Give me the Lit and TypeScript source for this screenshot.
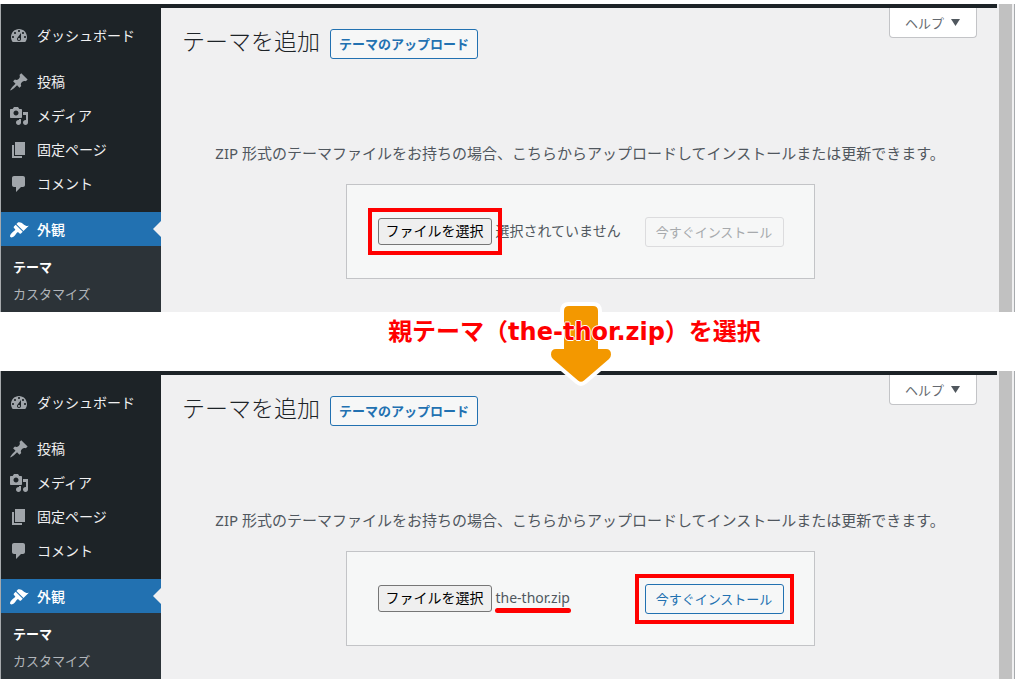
import { LitElement, html, css, svg } from "lit";
import { customElement, property } from "lit/decorators.js";
import { classMap } from "lit/directives/class-map.js";

const ICONS: Record<string, string> = {
  dashboard:
    "M3.76 16h12.48c1.1-1.37 1.76-3.11 1.76-5 0-4.42-3.58-8-8-8s-8 3.58-8 8c0 1.89.66 3.63 1.76 5zM10 4c.55 0 1 .45 1 1s-.45 1-1 1-1-.45-1-1 .45-1 1-1zM6 6c.55 0 1 .45 1 1s-.45 1-1 1-1-.45-1-1 .45-1 1-1zm8 0c.55 0 1 .45 1 1s-.45 1-1 1-1-.45-1-1 .45-1 1-1zm-5.37 5.55L12 7v6c0 1.1-.9 2-2 2s-2-.9-2-2c0-.57.24-1.08.63-1.45zM4 10c.55 0 1 .45 1 1s-.45 1-1 1-1-.45-1-1 .45-1 1-1zm12 0c.55 0 1 .45 1 1s-.45 1-1 1-1-.45-1-1 .45-1 1-1zm-5 3c0-.55-.45-1-1-1s-1 .45-1 1 .45 1 1 1 1-.45 1-1z",
  post: "M10.44 3.02l1.82-1.82 6.36 6.35-1.83 1.82c-1.05-.68-2.48-.57-3.41.36l-.75.75c-.92.93-1.04 2.35-.35 3.41l-1.83 1.82-2.41-2.41-2.8 2.79c-.42.42-3.38 2.71-3.8 2.29s1.86-3.39 2.28-3.81l2.79-2.79L4.1 9.36l1.83-1.82c1.05.69 2.48.57 3.4-.36l.75-.75c.93-.92 1.05-2.35.36-3.41z",
  media:
    "M13 11V4c0-.55-.45-1-1-1h-1.67L9 1H5L3.67 3H2c-.55 0-1 .45-1 1v7c0 .55.45 1 1 1h10c.55 0 1-.45 1-1zM7 4.5c1.38 0 2.5 1.12 2.5 2.5S8.38 9.5 7 9.5 4.5 8.38 4.5 7 5.62 4.5 7 4.5zM14 6h5v10.5c0 1.38-1.12 2.5-2.5 2.5S14 17.88 14 16.5s1.12-2.5 2.5-2.5c.17 0 .34.02.5.05V9h-3V6zm-4 8.05V13h2v3.5c0 1.38-1.12 2.5-2.5 2.5S7 17.88 7 16.5 8.12 14 9.5 14c.17 0 .34.02.5.05z",
  page: "M6 15V2h10v13H6zm-1 1h8v2H3V5h2v11z",
  comment:
    "M5 2h9c1.1 0 2 .9 2 2v7c0 1.1-.9 2-2 2h-2l-5 5v-5H5c-1.1 0-2-.9-2-2V4c0-1.1.9-2 2-2z",
  appearance:
    "M14.48 11.06L7.41 3.99l1.5-1.5c.5-.56 2.3-.47 3.51.32 1.21.8 1.43 1.28 2.91 2.1 1.18.64 2.45 1.26 4.45.85zm-.71.71L6.7 4.7 4.93 6.47c-.39.39-.39 1.02 0 1.41l1.06 1.06c.39.39.39 1.03 0 1.42-.6.6-1.43 1.11-2.21 1.69-.35.26-.7.53-1.01.84C1.43 14.23.4 16.08 1.4 17.07c.99 1 2.84-.03 4.18-1.36.31-.31.58-.66.85-1.02.57-.78 1.08-1.61 1.69-2.21.39-.39 1.02-.39 1.41 0l1.06 1.06c.39.39 1.02.39 1.41 0z",
};

interface MenuItem {
  icon: string;
  label: string;
  separated?: boolean;
  current?: boolean;
}

const MENU: MenuItem[] = [
  { icon: "dashboard", label: "ダッシュボード" },
  { icon: "post", label: "投稿", separated: true },
  { icon: "media", label: "メディア" },
  { icon: "page", label: "固定ページ" },
  { icon: "comment", label: "コメント" },
  { icon: "appearance", label: "外観", separated: true, current: true },
];

@customElement("admin-menu")
class AdminMenu extends LitElement {
  static styles = css`
    :host {
      display: block;
      background: #1d2327;
      font-size: 14px;
    }
    ul {
      list-style: none;
      margin: 0;
      padding: 0;
    }
    .menu {
      padding-top: 10px;
    }
    .separated {
      margin-top: 12px;
    }
    .item {
      display: flex;
      align-items: center;
      gap: 8px;
      height: 34px;
      padding-left: 8px;
      color: #f0f0f1;
      text-decoration: none;
      position: relative;
    }
    .item svg {
      width: 20px;
      height: 20px;
      margin-top: 2px;
      fill: #a0a5aa;
    }
    .current {
      background: #2271b1;
      color: #fff;
      font-weight: 500;
    }
    .current svg {
      fill: #fff;
    }
    .current::after {
      content: "";
      position: absolute;
      right: 0;
      top: 9px;
      border: 8px solid transparent;
      border-left-width: 0;
      border-right-color: #f0f0f1;
    }
    .submenu {
      background: #2c3338;
      padding: 8px 0 4px;
      font-size: 13px;
    }
    .submenu a {
      display: block;
      line-height: 27px;
      padding-left: 12px;
      color: #b1b5ba;
      text-decoration: none;
    }
    .submenu .active {
      color: #fff;
      font-weight: 700;
    }
  `;

  render() {
    return html`
      <nav>
        <ul class="menu">
          ${MENU.map(
            (m) => html`
              <li class=${classMap({ separated: !!m.separated })}>
                <a class=${classMap({ item: true, current: !!m.current })} href="#">
                  <svg viewBox="0 0 20 20" aria-hidden="true">
                    ${svg`<path fill-rule="evenodd" d=${ICONS[m.icon]}></path>`}
                  </svg>
                  <span>${m.label}</span>
                </a>
              </li>
            `
          )}
        </ul>
        <ul class="submenu">
          <li><a class="active" href="#">テーマ</a></li>
          <li><a href="#">カスタマイズ</a></li>
        </ul>
      </nav>
    `;
  }
}

@customElement("theme-screen")
class ThemeScreen extends LitElement {
  @property() file = "";

  static styles = css`
    :host {
      display: grid;
      grid-template-columns: 160px 1fr 13px 2px 1px;
      border-left: 1px solid #a7aaad;
      background: #f0f0f1;
      overflow: hidden;
    }
    .bar {
      grid-column: 1 / 3;
      height: 4px;
      margin-right: 2px;
      background: #1d2327;
    }
    .scroll {
      grid-column: 3;
      grid-row: 1 / 3;
      background: #c1c1c1;
    }
    .edge {
      grid-column: 5;
      grid-row: 1 / 3;
      background: #a7aaad;
    }
    admin-menu {
      grid-column: 1;
      grid-row: 2;
    }
    main {
      grid-column: 2;
      grid-row: 2;
    }
    button {
      font-family: inherit;
      cursor: pointer;
    }
    .top {
      display: flex;
      align-items: flex-start;
      gap: 10px;
      padding: 0 22px 0 21px;
    }
    h1 {
      margin: 17px 0 0;
      font-size: 23px;
      font-weight: 300;
      line-height: 32px;
      color: #1d2327;
    }
    .upload,
    .install {
      box-sizing: border-box;
      height: 30px;
      border: 1px solid #2271b1;
      border-radius: 3px;
      background: #f6f7f7;
      color: #2271b1;
      font-size: 13px;
      line-height: 26px;
      white-space: nowrap;
    }
    .upload {
      margin-top: 21px;
      padding: 0 8px;
      font-weight: 700;
    }
    .help {
      margin-left: auto;
      height: 30px;
      padding: 0 16px 0 15px;
      border: 1px solid #c3c4c7;
      border-top: 0;
      border-radius: 0 0 4px 4px;
      background: #fff;
      color: #646970;
      font-size: 13px;
      display: flex;
      align-items: center;
      gap: 7px;
    }
    .help svg {
      width: 9px;
      height: 7px;
      fill: #50575e;
    }
    .note {
      margin: 81px 0 18px;
      text-align: center;
      font-size: 15px;
      line-height: 26px;
      color: #50575e;
      white-space: nowrap;
    }
    form {
      box-sizing: border-box;
      width: fit-content;
      margin: 0 auto;
      display: flex;
      align-items: center;
      height: 95px;
      padding: 0 30px 0 31px;
      border: 1px solid #c3c4c7;
      background: #f6f7f7;
    }
    .picker {
      display: flex;
      align-items: baseline;
      gap: 4px;
      width: 267px;
      font-size: 14px;
      color: #50575e;
    }
    .picker input {
      position: absolute;
      opacity: 0;
      width: 1px;
      height: 1px;
      margin: 0;
    }
    .choose {
      box-sizing: border-box;
      height: 27px;
      padding: 0 7px;
      border: 1px solid #767676;
      border-radius: 3px;
      background: #efefef;
      color: #000;
      line-height: 23px;
      white-space: nowrap;
      cursor: pointer;
    }
    .status {
      line-height: 23px;
      white-space: nowrap;
      position: relative;
    }
    .underlined::after {
      content: "";
      position: absolute;
      left: -1px;
      right: -1px;
      bottom: -4px;
      height: 5px;
      border-radius: 3px;
      background: #f00;
    }
    .install {
      min-width: 139px;
      padding: 0 10px;
    }
    .install:disabled {
      color: #a7aaad;
      border-color: #dcdcde;
      cursor: default;
    }
    .marked {
      position: relative;
      z-index: 1;
    }
    .marked::after {
      content: "";
      position: absolute;
      inset: -11px;
      border: 4px solid #f00;
    }
  `;

  render() {
    const chosen = this.file !== "";
    return html`
      <div class="bar"></div>
      <div class="scroll"></div>
      <div class="edge"></div>
      <admin-menu></admin-menu>
      <main>
        <div class="top">
          <h1>テーマを追加</h1>
          <button class="upload" type="button">テーマのアップロード</button>
          <button class="help" type="button">
            ヘルプ
            <svg viewBox="0 0 9 7" aria-hidden="true"><path d="M0 0h9L4.5 7z" /></svg>
          </button>
        </div>
        <p class="note">
          ZIP 形式のテーマファイルをお持ちの場合、こちらからアップロードしてインストールまたは更新できます。
        </p>
        <form>
          <div class="picker">
            <input id="zip" type="file" accept=".zip" />
            <label for="zip" class=${classMap({ choose: true, marked: !chosen })}
              >ファイルを選択</label
            >
            <span class=${classMap({ status: true, underlined: chosen })}
              >${chosen ? this.file : "選択されていません"}</span
            >
          </div>
          <button
            type="button"
            class=${classMap({ install: true, marked: chosen })}
            ?disabled=${!chosen}
          >
            今すぐインストール
          </button>
        </form>
      </main>
    `;
  }
}

@customElement("app-root")
class AppRoot extends LitElement {
  static styles = css`
    :host {
      display: block;
      padding: 4px 0 7px;
      background: #fff;
      font-family: "Noto Sans", "Noto Sans CJK JP", sans-serif;
    }
    .step {
      position: relative;
      z-index: 1;
      height: 59px;
      margin: 0 15px 0 161px;
    }
    .arrow {
      position: absolute;
      left: calc(50% - 36px);
      top: -12px;
      width: 72px;
      height: 88px;
    }
    .caption {
      position: relative;
      margin: 0;
      padding-right: 12px;
      text-align: center;
      font-family: "DejaVu Sans", "Noto Sans CJK JP", sans-serif;
      font-size: 24px;
      font-weight: 700;
      line-height: 40px;
      color: #f00;
      white-space: nowrap;
      text-shadow: 1px 0 #fff, -1px 0 #fff, 0 1px #fff, 0 -1px #fff;
    }
  `;

  render() {
    return html`
      <theme-screen></theme-screen>
      <div class="step">
        <svg class="arrow" viewBox="0 0 72 88" aria-hidden="true">
          <path
            d="M24 6H48Q53 6 53 11V49H61Q66 49 66 54.500Q66 57 64 59L39 80.500Q36 83 33 80.500L8 59Q6 57 6 54.500Q6 49 11 49H19V11Q19 6 24 6Z"
            fill="#f39800"
            stroke="#fff"
            stroke-width="8"
            stroke-linejoin="round"
            paint-order="stroke"
          />
        </svg>
        <p class="caption">親テーマ（the-thor.zip）を選択</p>
      </div>
      <theme-screen file="the-thor.zip"></theme-screen>
    `;
  }
}
